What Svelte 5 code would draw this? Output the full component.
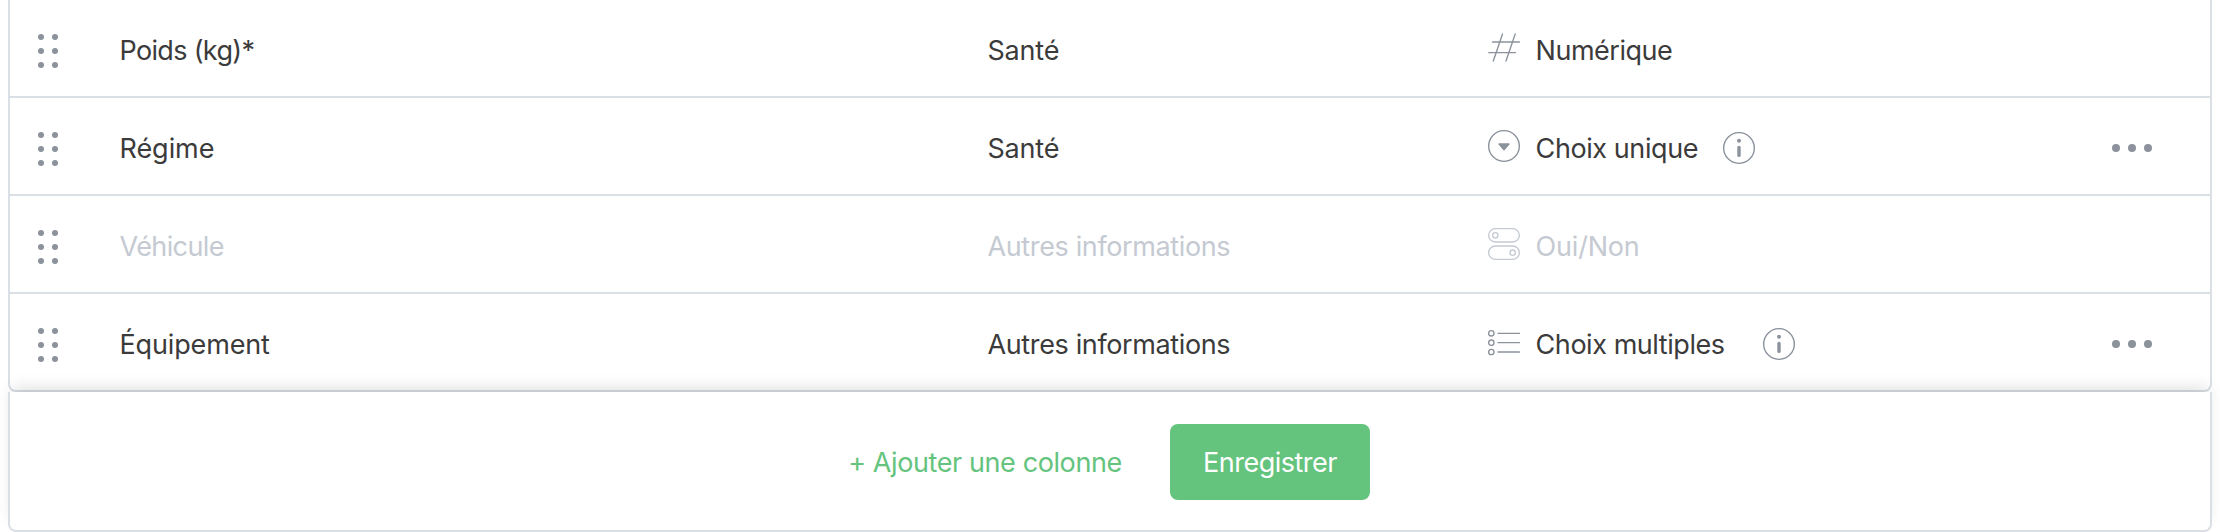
<script>
  const rows = [
    { name: 'Poids (kg)*', nameTrack: -0.67, group: 'Santé', groupTrack: -0.2, icon: 'number', type: 'Numérique', typeTrack: -0.48 },
    { name: 'Régime', nameTrack: -0.05, group: 'Santé', groupTrack: -0.2, icon: 'select', type: 'Choix unique', typeTrack: -0.42, labelWidth: 187, menu: true },
    { name: 'Véhicule', nameTrack: -0.6, group: 'Autres informations', groupTrack: -0.37, icon: 'toggle', type: 'Oui/Non', typeTrack: -0.2, disabled: true },
    { name: 'Équipement', nameTrack: -0.15, group: 'Autres informations', groupTrack: -0.37, icon: 'list', type: 'Choix multiples', typeTrack: -0.45, labelWidth: 227, menu: true }
  ];
</script>

<main>
  <section class="table">
    {#each rows as row}
      <div class="row" class:disabled={row.disabled}>
        <div class="handle">
          {#each Array(6) as _}<i></i>{/each}
        </div>
        <div class="name" style:letter-spacing="{row.nameTrack}px">{row.name}</div>
        <div class="group" style:letter-spacing="{row.groupTrack}px">{row.group}</div>
        <div class="type">
          <svg class="kind" viewBox="0 0 32 32" fill="none" stroke="currentColor" stroke-width="1.35" stroke-linecap="round">
            {#if row.icon === 'number'}
              <path d="M4.5 10H31.5M.7 20.6H27.5M14.5 2L5.3 29M27.2 2L18 29" />
            {:else if row.icon === 'select'}
              <circle cx="16" cy="16" r="15.33" />
              <path d="M11 14h10l-5 5.7z" fill="currentColor" stroke-linejoin="round" />
            {:else if row.icon === 'toggle'}
              <rect x=".67" y=".67" width="30.66" height="13.33" rx="6.67" />
              <rect x=".67" y="18" width="30.66" height="13.33" rx="6.67" />
              <circle cx="7.33" cy="7.33" r="2.67" />
              <circle cx="24.67" cy="24.67" r="2.67" />
            {:else}
              <circle cx="3.33" cy="7.33" r="2.67" />
              <circle cx="3.33" cy="16.67" r="2.67" />
              <circle cx="3.33" cy="26" r="2.67" />
              <path d="M10 7.33H31.4M10 16.67H31.4M10 26H31.4" />
            {/if}
          </svg>
          <span class="label" style:letter-spacing="{row.typeTrack}px" style:width={row.labelWidth ? `${row.labelWidth}px` : 'auto'}>{row.type}</span>
          {#if row.menu}
            <svg class="info" viewBox="0 0 32 32" fill="none" stroke="currentColor">
              <circle cx="16" cy="16" r="15.33" stroke-width="1.35" />
              <circle cx="16" cy="8.7" r="2" fill="currentColor" stroke="none" />
              <path d="M16 15.4V23.4" stroke-width="3.4" stroke-linecap="round" />
            </svg>
          {/if}
        </div>
        {#if row.menu}
          <div class="menu"><i></i><i></i><i></i></div>
        {/if}
      </div>
    {/each}
  </section>
  <footer>
    <button class="add">+ Ajouter une colonne</button>
    <button class="save">Enregistrer</button>
  </footer>
</main>

<style>
  :global(body) { background: #fff; }
  main {
    box-sizing: border-box;
    height: 532px;
    padding: 0 8px;
    overflow: hidden;
    font: 27px/34px Inter, sans-serif;
    color: #3b3b3b;
  }
  .table {
    box-sizing: border-box;
    height: 392px;
    border: 2px solid #dadfe5;
    border-top: 0;
    border-radius: 0 0 8px 8px;
  }
  .row {
    box-sizing: border-box;
    display: grid;
    grid-template-columns: 109.5px 868px 500.5px 624px 1fr;
    align-items: center;
    height: 98px;
    padding-top: 4px;
    border-bottom: 2px solid #dadfe5;
    white-space: nowrap;
  }
  .row:last-child { border-bottom: 0; height: 96px; }
  .disabled { color: #c5cad2; }
  .name, .group { padding-top: 2px; }
  .label { padding-top: 2px; }
  .handle {
    display: grid;
    grid-template-columns: 6px 6px;
    gap: 8px;
    padding: 2px 0 0 28px;
  }
  .handle i {
    width: 6px;
    height: 6px;
    border-radius: 50%;
    background: #8b929c;
  }
  .type { display: flex; align-items: center; }
  .kind, .info {
    flex: none;
    width: 32px;
    height: 32px;
    color: #8b929c;
  }
  .kind { margin: 0 15.6px 4px 0; }
  .disabled .kind { color: #c5cad2; }
  .menu { display: flex; gap: 8px; }
  .menu i {
    width: 8px;
    height: 8px;
    border-radius: 50%;
    background: #8b929c;
  }
  footer {
    box-sizing: border-box;
    display: flex;
    justify-content: center;
    align-items: flex-start;
    gap: 16px;
    height: 140px;
    padding: 32px 34px 0 0;
    border: 2px solid #dadfe5;
    border-top: 0;
    border-radius: 0 0 8px 8px;
    background: #fff;
    box-shadow: 0 -8px 16px -4px rgba(0, 0, 0, .13);
    position: relative;
  }
  button {
    height: 76px;
    padding: 2px 0 0;
    border: 0;
    border-radius: 8px;
    font: inherit;
    white-space: nowrap;
  }
  .add {
    width: 338px;
    background: none;
    color: #64c37d;
    letter-spacing: -.4px;
  }
  .save {
    width: 200px;
    background: #64c37d;
    color: #fff;
    letter-spacing: -.5px;
  }
</style>
